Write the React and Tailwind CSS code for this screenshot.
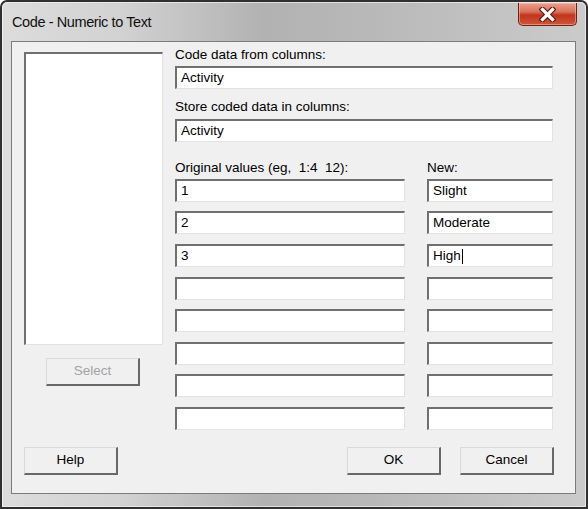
import React from 'react';

const font = { fontFamily: '"Liberation Sans", Arial, sans-serif' };

function Field({ value, caret }) {
  return (
    <div className="h-[23px] bg-white border-t-2 border-l-2 border-t-[#707070] border-l-[#707070] border-r border-b border-r-[#e2e2e2] border-b-[#e2e2e2] flex items-center pl-[4px] text-[13.5px] leading-[16px] text-black">
      <span>{value}</span>
      {caret && <span className="inline-block w-px h-[15px] bg-black ml-px" />}
    </div>
  );
}

function WinButton({ label, disabled, className = '' }) {
  return (
    <div
      className={`w-[94px] h-[28px] bg-[#f0f0f0] border-t border-l border-t-[#dadada] border-l-[#dadada] border-r-2 border-b-2 border-r-[#686868] border-b-[#686868] flex items-center justify-center text-[13.5px] ${
        disabled ? 'text-[#a3a3a3]' : 'text-black'
      } ${className}`}
    >
      {label}
    </div>
  );
}

function CloseButton() {
  return (
    <div className="w-[59px] h-[23px] rounded-b-[5px] border border-t-0 border-[#6b2419] bg-[linear-gradient(180deg,#eaa08e_0%,#d9705a_40%,#c0351c_55%,#d0553a_100%)] shadow-[inset_0_0_0_1px_rgba(255,210,200,0.45)] flex items-center justify-center">
      <svg width="17" height="15" viewBox="0 0 17 15">
        <path d="M3.5 2.5 L13.5 12.5 M13.5 2.5 L3.5 12.5" stroke="#5a1c12" strokeWidth="5.5" strokeLinecap="square" />
        <path d="M3.5 2.5 L13.5 12.5 M13.5 2.5 L3.5 12.5" stroke="#ffffff" strokeWidth="3.2" strokeLinecap="square" />
      </svg>
    </div>
  );
}

export default function App() {
  const originals = ['1', '2', '3', '', '', '', '', ''];
  const coded = ['Slight', 'Moderate', 'High', '', '', '', '', ''];

  return (
    <div className="w-[588px] h-[509px]" style={font}>
      {/* window frame */}
      <div className="w-full h-full border-2 border-[#303030] rounded-t-[7px] bg-[linear-gradient(90deg,#dcdcdc_0%,#d2d2d2_20%,#b2b2b2_45%,#b9b9b9_65%,#cbcbcb_100%)]">
        <div className="w-full h-full border border-[#f2f2f2]/70 rounded-t-[6px] flex flex-col">
          {/* title bar */}
          <div className="h-[38px] flex justify-between pl-[9px] pr-[8px]">
            <div className="flex items-center text-[14.5px] leading-[20px] tracking-[-0.4px] text-[#111]">
              Code - Numeric to Text
            </div>
            <CloseButton />
          </div>

          {/* client area */}
          <div className="mx-[8px] mr-[9px] mb-[12px] flex-1 border border-[#7c7c7c] bg-[#f0f0f0] flex flex-col pt-[5px] pl-[12px] pr-[21px] pb-[18px]">
            <div className="flex items-start gap-[12px]">
              {/* column list */}
              <div className="w-[139px] mt-[5px] flex flex-col">
                <div className="h-[293px] bg-white border-t-2 border-l-2 border-t-[#707070] border-l-[#707070] border-r border-b border-r-[#e2e2e2] border-b-[#e2e2e2]" />
                <WinButton label="Select" disabled className="mt-[13px] ml-[22px]" />
              </div>

              {/* fields */}
              <div className="w-[378px] flex flex-col text-[13.5px] leading-[16px] text-black">
                <div>Code data from columns:</div>
                <div className="mt-[3px]">
                  <Field value="Activity" />
                </div>
                <div className="mt-[10px]">Store coded data in columns:</div>
                <div className="mt-[4px]">
                  <Field value="Activity" />
                </div>

                <div className="mt-[18px] grid grid-cols-[230px_126px] gap-x-[22px]">
                  <div className="whitespace-pre">Original values (eg,  1:4  12):</div>
                  <div>New:</div>
                </div>
                <div className="mt-[3px] grid grid-cols-[230px_126px] gap-x-[22px] gap-y-[9.6px]">
                  {originals.map((v, i) => (
                    <React.Fragment key={i}>
                      <Field value={v} />
                      <Field value={coded[i]} caret={i === 2} />
                    </React.Fragment>
                  ))}
                </div>
              </div>
            </div>

            {/* dialog buttons */}
            <div className="mt-[17px] flex justify-between">
              <WinButton label="Help" />
              <div className="flex gap-[19px]">
                <WinButton label="OK" />
                <WinButton label="Cancel" />
              </div>
            </div>
          </div>
        </div>
      </div>
    </div>
  );
}
